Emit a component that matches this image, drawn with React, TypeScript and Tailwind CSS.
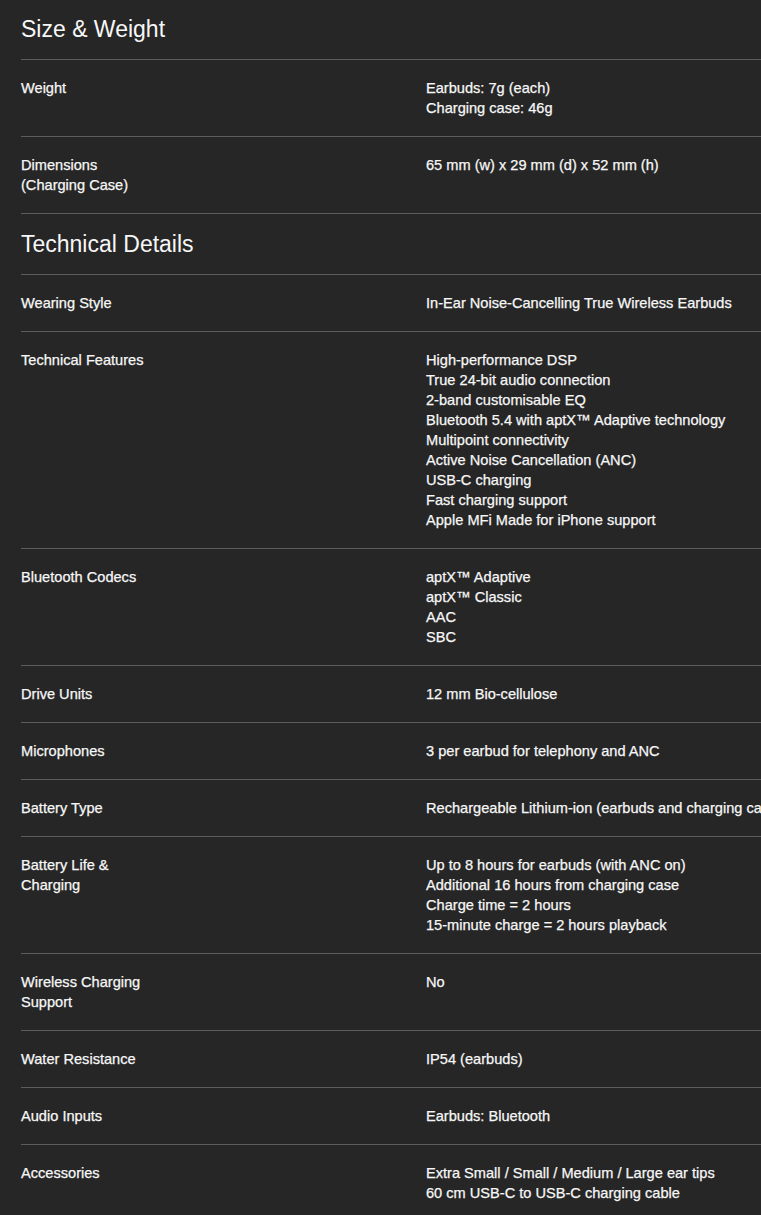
const sections: { title: string; rows: { label: string[]; value: string[] }[] }[] = [
  {
    title: "Size & Weight",
    rows: [
      { label: ["Weight"], value: ["Earbuds: 7g (each)", "Charging case: 46g"] },
      { label: ["Dimensions", "(Charging Case)"], value: ["65 mm (w) x 29 mm (d) x 52 mm (h)"] },
    ],
  },
  {
    title: "Technical Details",
    rows: [
      { label: ["Wearing Style"], value: ["In-Ear Noise-Cancelling True Wireless Earbuds"] },
      {
        label: ["Technical Features"],
        value: [
          "High-performance DSP",
          "True 24-bit audio connection",
          "2-band customisable EQ",
          "Bluetooth 5.4 with aptX™ Adaptive technology",
          "Multipoint connectivity",
          "Active Noise Cancellation (ANC)",
          "USB-C charging",
          "Fast charging support",
          "Apple MFi Made for iPhone support",
        ],
      },
      { label: ["Bluetooth Codecs"], value: ["aptX™ Adaptive", "aptX™ Classic", "AAC", "SBC"] },
      { label: ["Drive Units"], value: ["12 mm Bio-cellulose"] },
      { label: ["Microphones"], value: ["3 per earbud for telephony and ANC"] },
      { label: ["Battery Type"], value: ["Rechargeable Lithium-ion (earbuds and charging case)"] },
      {
        label: ["Battery Life &", "Charging"],
        value: [
          "Up to 8 hours for earbuds (with ANC on)",
          "Additional 16 hours from charging case",
          "Charge time = 2 hours",
          "15-minute charge = 2 hours playback",
        ],
      },
      { label: ["Wireless Charging", "Support"], value: ["No"] },
      { label: ["Water Resistance"], value: ["IP54 (earbuds)"] },
      { label: ["Audio Inputs"], value: ["Earbuds: Bluetooth"] },
      {
        label: ["Accessories"],
        value: ["Extra Small / Small / Medium / Large ear tips", "60 cm USB-C to USB-C charging cable"],
      },
    ],
  },
];

export default function App() {
  return (
    <div className="w-[761px] h-[1215px] overflow-hidden bg-[#262626] text-[#f7f7f7] font-['Liberation_Sans',Arial,sans-serif]">
      <div className="w-[810px] ml-[21px]">
        {sections.map((s, i) => (
          <section key={s.title} className={i > 0 ? "border-t border-[#5c5c5c]" : ""}>
            <h2 className={`${i > 0 ? "h-[60px]" : "h-[59px]"} flex items-center text-[23px] leading-7 pb-px`}>{s.title}</h2>
            {s.rows.map((r) => (
              <div key={r.label[0]} className="grid grid-cols-2 border-t border-[#5c5c5c] py-[18px] text-[14.6px] leading-5 [-webkit-text-stroke:0.25px_#f7f7f7]">
                <div>
                  {r.label.map((l) => (
                    <div key={l} className="whitespace-nowrap">{l}</div>
                  ))}
                </div>
                <div>
                  {r.value.map((v) => (
                    <div key={v} className="whitespace-nowrap">{v}</div>
                  ))}
                </div>
              </div>
            ))}
          </section>
        ))}
      </div>
    </div>
  );
}
